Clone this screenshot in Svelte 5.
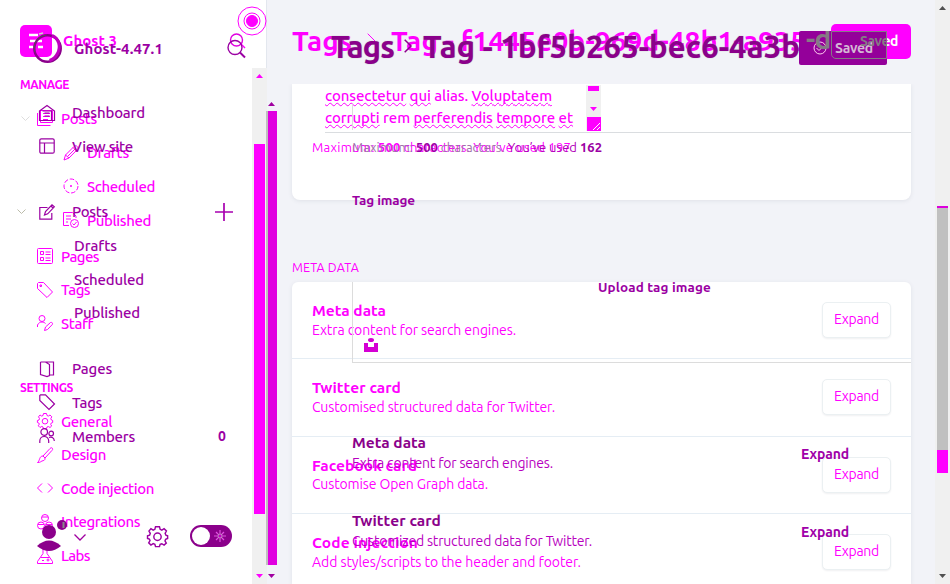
<script>
  // Stretches or tightens a label to the given width
  function fit(node, width) {
    const natural = node.getBoundingClientRect().width;
    node.style.letterSpacing = (width - natural) / node.textContent.length + 'px';
  }

  const previousNav = [
    { title: 'MANAGE', width: 49, items: [
      { label: 'Posts', width: 36, icon: 'posts', open: true },
      { label: 'Drafts', width: 42, icon: 'pencil', sub: true },
      { label: 'Scheduled', width: 68, icon: 'clock', sub: true },
      { label: 'Published', width: 64, icon: 'published', sub: true },
      { label: 'Pages', width: 38, icon: 'pages', gap: true },
      { label: 'Tags', width: 29, icon: 'tag' },
      { label: 'Staff', width: 32, icon: 'staff' }
    ] },
    { title: 'SETTINGS', width: 53, items: [
      { label: 'General', width: 51, icon: 'gear' },
      { label: 'Design', width: 45, icon: 'brush' },
      { label: 'Code injection', width: 93, icon: 'code' },
      { label: 'Integrations', width: 79, icon: 'modules' },
      { label: 'Labs', width: 29, icon: 'labs' }
    ] }
  ];

  const currentNav = [
    [
      { label: 'Dashboard', width: 73, icon: 'home' },
      { label: 'View site', width: 61, icon: 'layout' }
    ],
    [
      { label: 'Posts', width: 36, icon: 'edit', open: true, add: true },
      { label: 'Drafts', width: 43, sub: true },
      { label: 'Scheduled', width: 70, sub: true },
      { label: 'Published', width: 66, sub: true }
    ],
    [
      { label: 'Pages', width: 40, icon: 'book' },
      { label: 'Tags', width: 30, icon: 'label' },
      { label: 'Members', width: 63, icon: 'members', count: 0 }
    ]
  ];

  const sections = [
    { title: 'Meta data', tw: 74, text: 'Extra content for search engines.', dw: 204 },
    { title: 'Twitter card', tw: 89, text: 'Customised structured data for Twitter.', dw: 243 },
    { title: 'Facebook card', tw: 105, text: 'Customise Open Graph data.', dw: 176 },
    { title: 'Code injection', tw: 106, text: 'Add styles/scripts to the header and footer.', dw: 269 }
  ];

  const currentSections = [
    { title: 'Meta data', tw: 74, text: 'Extra content for search engines.', dw: 201 },
    { title: 'Twitter card', tw: 89, text: 'Customized structured data for Twitter.', dw: 240 }
  ];
</script>

{#snippet icon(name)}
  <svg class="icon" viewBox="0 0 16 16" width="16" height="16">
    {#if name === 'posts'}
      <path d="M3.5 .5h12v12h-12zM6 3.5h7M6 6.5h7M6 9.500h5M.5 3v12.500h13" />
    {:else if name === 'pencil'}
      <path d="M1 15l1.500-5L11 1.500c1-1 2.500-1 3.300 0 .9 1 .8 2.200 0 3L6 13zM2.500 10L6 13M4.500 11.500l8-8M10 2.500l3.500 3.500" />
    {:else if name === 'clock'}
      <circle cx="8" cy="8" r="7" stroke-dasharray="4.500 1.800" /><circle cx="8" cy="8" r=".6" fill="currentColor" />
    {:else if name === 'published'}
      <path d="M13 6V4L9.500.5H.5v13H6M3 4h5M3 7h5M3 10h2M9.500 11.500l1.500 1.500 2.500-3" /><circle cx="11.500" cy="11.500" r="4" />
    {:else if name === 'pages'}
      <rect x=".5" y=".5" width="15" height="15" rx="1" /><path d="M3.500 3.500h3v3h-3zM3.500 9.500h3v3h-3zM8.500 4h5M8.500 6.500h5M8.500 10h5M8.500 12.500h5" />
    {:else if name === 'tag'}
      <path d="M.5 1.500v5L10 15.500l5.500-5.500L6.500.5h-5zM3 3h1.500v1.500H3z" />
    {:else if name === 'label'}
      <path d="M.8 1.500v5L10 15.500l5.500-5.500L6.500.8h-5z" />
    {:else if name === 'staff'}
      <circle cx="5" cy="3.500" r="3" /><path d="M.5 12V10c1-2 2.500-3 4.500-3 1.500 0 2.500.5 3.500 1.500M7.500 15.500l1-3.500 5-4.500c1.500-.5 2.500.7 1.800 2L10.500 14.500z" />
    {:else if name === 'gear'}
      <path d="M6.500 .5h3l.5 2 1.300.6L13 2l1.800 1.800-1 1.800.6 1.400 1.300.5v2l-1.500.6-.5 1.300 1 1.600L13 14.500l-1.700-1-1.300.5-.5 1.700h-3L6 14l-1.300-.6L3 14.500 1.300 12.800l1-1.700L1.800 10 .4 9.500v-2L2 7l.5-1.400-1-1.800L3 2l1.700 1.100L6 2.500z" /><circle cx="8" cy="8.200" r="2.800" />
    {:else if name === 'brush'}
      <path d="M6 9l7-7.500c1-1 2.200-1 2.500 0 .4.800 0 1.500-.6 2L8 11M6 9l2 2c.3 2.500-1.500 2.500-3 3-1.500.6-1.500 1.500-4.500 1.500C3 14 2 9 6 9z" />
    {:else if name === 'code'}
      <path d="M5 3.500L.5 8 5 12.500M11 3.500L15.500 8 11 12.500" />
    {:else if name === 'modules'}
      <circle cx="8" cy="4" r="3.500" /><circle cx="4" cy="11.500" r="3.500" /><circle cx="12" cy="11.500" r="3.500" /><path d="M5 3h6M1 10.500h6M9 10.500h6" />
    {:else if name === 'labs'}
      <path d="M5 .5h6M6 .5v5L.5 13.500v2h15v-2L10 5.500v-5M3.500 9.500h9M5 12.500h2M9.500 12h3M11 10.500v3" />
    {:else if name === 'home'}
      <path d="M.5 6L8 .5 15.500 6v9.500H.5zM3.500 6h9v9.500M5.500 8h5M5.500 11h5" />
    {:else if name === 'layout'}
      <rect x=".8" y=".8" width="14.400" height="14.400" rx="1.500" /><path d="M.8 5h14.400M5.500 5v10" />
    {:else if name === 'edit'}
      <path d="M8.500 3.500H.8v11.700h12V9M5.500 11l1-3.500L13 .8l2.300 2L8.700 9.800zM12 2l2 2" />
    {:else if name === 'book'}
      <path d="M1.500 1h13v13H11M1.500 1v12.500L8 15.500 10.500 14.500V3.500L6.500 1" />
    {:else if name === 'members'}
      <circle cx="5.200" cy="4" r="3.300" /><circle cx="12.200" cy="5.500" r="2.300" /><path d="M.8 15v-2c0-3 2-4.500 4.400-4.500S9.700 10 9.700 13v2M10 9.500c3-1 5.200.2 5.300 3.500" />
    {/if}
  </svg>
{/snippet}

{#snippet down()}<svg class="caret" viewBox="0 0 9 5" width="9" height="5"><path d="M.5.5l4 4 4-4" /></svg>{/snippet}

<div class="screen">
  <div class="layer previous">
    <aside>
      <div class="brand">
        <svg width="32" height="32" viewBox="0 0 32 32"><rect width="32" height="32" rx="5" fill="#f0f" /><path d="M9 10h9M10 16h12M9 22h6M18 22h5" stroke="#fff" stroke-width="2.500" /><path d="M19 9l4-1" stroke="#d0d0d0" stroke-width="1.500" /></svg>
        <b use:fit={54}>Ghost 3</b>
      </div>
      {#each previousNav as group}
        <section>
          <h4><span use:fit={group.width}>{group.title}</span></h4>
          {#each group.items as item}
            <div class="item" class:sub={item.sub} class:gap={item.gap}>
              <i>{#if item.open}{@render down()}{/if}</i>
              {@render icon(item.icon)}
              <span use:fit={item.width}>{item.label}</span>
            </div>
          {/each}
        </section>
      {/each}
    </aside>

    <main>
      <header>
        <h1><span use:fit={60}>Tags</span><svg width="9" height="16" viewBox="0 0 9 16"><path d="M.7.7L8 8 .7 15.300" /></svg><span use:fit={415}>Tag - f1445e0b-969d-48b1-a935</span></h1>
        <div class="save"><span use:fit={37}>Sa<em>ved</em></span></div>
      </header>
      <div class="card details">
        <div class="area">
          <div class="copy">
            <p><span use:fit={227}><u>consectetur</u> <u>qui</u> alias. <u>Voluptatem</u></span></p>
            <p><span use:fit={248}><u>corrupti</u> rem <u>perferendis</u> <u>tempore</u> <u>et</u></span></p>
          </div>
          <div class="areabar"><b></b><svg width="7" height="4" viewBox="0 0 7 4"><path d="M0 0h7L3.500 4z" /></svg><svg class="grip" width="14" height="14" viewBox="0 0 14 14"><path d="M0 0h14v14H0z" /><path d="M6 13l7-7M10 13l3-3" stroke="#fff" /></svg></div>
        </div>
        <div class="limit"><span use:fit={259}>Maximum: <b>500</b> characters. You’ve used 197</span></div>
      </div>
      <h5><span use:fit={67}>META DATA</span></h5>
      <div class="card list">
        {#each sections as s}
          <div class="setting">
            <div><h3><span use:fit={s.tw}>{s.title}</span></h3><p><span use:fit={s.dw}>{s.text}</span></p></div>
            <button><span use:fit={45}>Expand</span></button>
          </div>
        {/each}
      </div>
    </main>
    <div class="pagebar">
      <svg width="7" height="4" viewBox="0 0 7 4"><path d="M0 4h7L3.500 0z" /></svg>
      <div class="thumb"></div>
      <svg width="7" height="4" viewBox="0 0 7 4"><path d="M0 0h7L3.500 4z" /></svg>
    </div>
  </div>

  <div class="navbar">
    <svg width="7" height="4" viewBox="0 0 7 4"><path d="M0 4h7L3.500 0z" /></svg>
    <div class="thumb"></div>
    <svg width="7" height="4" viewBox="0 0 7 4"><path d="M0 0h7L3.500 4z" /></svg>
  </div>
  <div class="navbar shifted">
    <svg width="7" height="4" viewBox="0 0 7 4"><path d="M0 4h7L3.500 0z" /></svg>
    <div class="thumb"></div>
    <svg width="7" height="4" viewBox="0 0 7 4"><path d="M0 0h7L3.500 4z" /></svg>
  </div>

  <div class="layer current">
    <aside>
      <div class="brand">
        <svg width="31" height="31" viewBox="0 0 31 31"><circle cx="15.500" cy="15.500" r="13.200" fill="none" stroke="#8b008b" stroke-width="2.500" /><path d="M20 2.500c7 3 9 11 5.500 18-2 4-5 6-8 7" fill="none" stroke="#c000c0" stroke-width="3" /><path d="M3 19C0 11 5 3 14 2" fill="none" stroke="#555" /></svg>
        <b use:fit={89}>Ghost-4.47.1</b>
        <svg class="search" width="20" height="28" viewBox="0 0 20 28"><circle cx="9.500" cy="8" r="6" stroke="#e000e0" /><path d="M14 12l4 4" stroke="#f0f" /><circle cx="8" cy="15.500" r="7" /><path d="M13 20.500l5 5" stroke-width="2" /></svg>
      </div>
      {#each currentNav as group}
        <section>
          {#each group as item}
            <div class="item" class:sub={item.sub}>
              <i>{#if item.open}{@render down()}{/if}</i>
              {#if item.icon}{@render icon(item.icon)}{/if}
              <span use:fit={item.width}>{item.label}</span>
              {#if item.add}<svg class="add" width="18" height="18" viewBox="0 0 18 18"><path d="M9 0v18M0 9h18" /></svg>{/if}
              {#if item.count !== undefined}<b class="count">{item.count}</b>{/if}
            </div>
          {/each}
        </section>
      {/each}
      <footer>
        <svg width="50" height="36" viewBox="0 0 50 36"><circle cx="12" cy="14" r="7" /><path d="M0 28Q12 17 24 28Q12 38 0 28z" /><circle cx="25" cy="7" r="5" /><path d="M26.500 4v6" stroke="#888" stroke-width="2" /><path d="M37.500 16.500l5.500 5.500 5.500-5.500" fill="none" stroke="#a000a0" stroke-width="1.300" /></svg>
        <span class="cog">{@render icon('gear')}</span>
        <div class="toggle"><b></b><svg width="12" height="12" viewBox="0 0 12 12"><path d="M6 0v3M6 9v3M0 6h3M9 6h3M2 2l2 2M8 8l2 2M10 2L8 4M4 8l-2 2" stroke="#e050e0" stroke-width="1.200" /><circle cx="6" cy="6" r="2.200" fill="#c000c0" stroke="#ddd" stroke-width=".7" /></svg></div>
      </footer>
    </aside>
    <main>
      <header>
        <h1><span use:fit={63}>Tags</span><svg width="8" height="14" viewBox="0 0 8 14"><path d="M.7.7L7 7 .7 13.300" /></svg><span use:fit={377}>Tag - 1bf5b265-bec6-4a3b</span></h1>
        <div class="save">
          <span class="spill">-d</span>
          <svg width="14" height="14" viewBox="0 0 14 14"><circle cx="7" cy="7" r="6" /><path d="M3.500 7l2.500 2.500L10.500 5" /></svg>
          <span use:fit={38}>Saved</span>
          <div class="edge"><span use:fit={37}>Saved</span></div>
        </div>
      </header>
      <div class="tick"></div>
      <div class="limit"><span use:fit={250}>Maximum: <b>500</b> characters. <mark>You’ve used <b>162</b></mark></span></div>
      <h4><span use:fit={63}>Tag image</span></h4>
      <div class="upload">
        <span use:fit={113}>Upload tag image</span>
        <svg width="14" height="14" viewBox="0 0 14 14"><ellipse cx="7" cy="2" rx="3" ry="2" /><path d="M0 5h4v4h6V5h4v9H0z" /></svg>
      </div>
      {#each currentSections as s}
        <div class="setting">
          <div><h3><span use:fit={s.tw}>{s.title}</span></h3><p><span use:fit={s.dw}>{s.text}</span></p></div>
          <b class="expand"><span use:fit={48}>Expand</span></b>
        </div>
      {/each}
    </main>
  </div>

  <svg class="beacon" width="30" height="30" viewBox="0 0 30 30"><circle cx="15" cy="15" r="14" fill="#fff" /><circle cx="15" cy="15" r="8" fill="none" /><circle cx="15" cy="15" r="5.500" fill="#f0f" /></svg>
</div>

<style>
  :global(body) { margin: 0; }
  .screen { position: relative; width: 950px; height: 584px; overflow: hidden; background: #f2f3f8; font-family: Ubuntu, "Noto Sans", "Open Sans", sans-serif; font-size: 15px; color: #f0f; }
  .screen * { box-sizing: border-box; }
  span, b { white-space: nowrap; }
  span { display: inline-block; flex: none; }
  h1, h3, h4, h5, p { margin: 0; }
  svg { display: block; flex: none; overflow: visible; }
  .layer { position: absolute; inset: 0; display: flex; }
  aside { flex: none; width: 267px; height: 584px; display: flex; flex-direction: column; }
  .icon { fill: none; stroke: currentColor; stroke-width: 1; }
  .item { display: flex; align-items: center; height: 33.600px; flex: none; }
  .item i { width: 37px; padding-left: 21px; flex: none; }
  .item .icon { margin-right: 8px; }
  .caret { fill: none; stroke: #ddd; }
  main { flex: none; display: flex; flex-direction: column; }
  header { display: flex; align-items: center; position: relative; }
  h1 { display: flex; align-items: center; font-weight: 700; line-height: 1; }
  h1 svg { fill: none; stroke: currentColor; stroke-width: 1.500; }
  .setting { display: flex; justify-content: space-between; height: 77.400px; }
  .setting p { font-size: 14px; line-height: 18px; }
  h3 { font-size: 15.500px; line-height: 20px; font-weight: 700; }
  .limit { font-size: 13px; line-height: 18px; }

  .previous { font-weight: 500; }
  .previous aside { background: #fff; border-right: 1px solid #e3e7ee; }
  .previous .brand { display: flex; padding: 25px 0 0 20px; height: 76px; gap: 11px; flex: none; }
  .previous .brand b { line-height: 32px; font-size: 15px; height: 32px; }
  .previous h4 { padding-left: 20px; font-size: 12px; font-weight: 700; line-height: 18px; height: 25.500px; }
  .previous section + section { margin-top: 38.700px; }
  .previous .sub i { width: 63px; }
  .previous .sub { position: relative; top: 1px; }
  .previous .gap { margin-top: 3.500px; }
  .previous main { width: 668px; padding: 0 24px 0 25px; }
  .previous header { height: 84px; padding-bottom: 3px; }
  .previous h1 { font-size: 28px; }
  .previous h1 svg { margin: 0 15px; stroke-width: 1; }
  .previous .save { position: absolute; right: 0; top: 24px; width: 80px; height: 35px; border-radius: 5px; background: #f0f; color: #857a85; font-size: 14px; font-weight: 600; line-height: 35px; padding-left: 30px; }
  em { font-style: normal; color: #fff; }
  .card { background: #fff; box-shadow: 0 1px 4px #dfe1e8; }
  .details { height: 116px; border-radius: 0 0 8px 8px; padding: 0 20px; clip-path: inset(0 -6px -6px -6px); }
  .area { display: flex; margin: 0 -20px 0 13px; height: 49px; border-bottom: 1px solid #dadde0; }
  .copy { width: 261px; padding-top: 1px; }
  .copy p { line-height: 22px; font-size: 15px; }
  u { text-decoration: underline wavy 1px; text-underline-offset: 1px; text-decoration-skip-ink: none; }
  .areabar { width: 15px; background: #f0f0f0; fill: #f0f; display: flex; flex-direction: column; align-items: center; margin-top: 1px; height: 46px; }
  .areabar b { width: 11px; height: 5px; margin: 1px 0 16px; background: #f0f; }
  .grip { margin-top: 6px; }
  .previous .limit { padding-top: 5px; font-weight: 400; }
  .previous .limit b { font-weight: 700; }
  h5 { font-size: 12.500px; font-weight: 400; line-height: 18px; padding-top: 58px; height: 82px; }
  .list { height: 302px; border-radius: 6px 6px 0 0; }
  .list .setting { padding: 19px 20px 0; border-bottom: 1px solid #e5edf4; font-weight: 400; }
  .list p { margin-top: -.500px; }
  button { width: 69px; height: 36px; margin-top: 1px; border: 1px solid #ebf0f2; border-radius: 5px; background: #fff; color: #f0f; padding: 0 0 2px; font: 14px Ubuntu, "Noto Sans", "Open Sans", sans-serif; box-shadow: 0 1px 2px #f0f0f2; }
  .pagebar { width: 15px; background: #f0f0f0; display: flex; flex-direction: column; align-items: center; justify-content: space-between; fill: #505050; padding: 6px 0 6px; }
  .pagebar .thumb { width: 11px; height: 267px; margin-top: 103px; border-top: 2px solid #d0d; border-bottom: 23px solid #f0f; background: #c0c0c0; margin-bottom: 8px; }

  .navbar { position: absolute; left: 252px; top: 68px; width: 15px; height: 516px; display: flex; flex-direction: column; align-items: center; background: #f0f0f0; padding-top: 6px; fill: #f0f; }
  .navbar .thumb { width: 11px; height: 370px; background: #f0f; margin: 66px 0 60px; }
  .navbar.shifted { left: 266px; top: 101px; width: 11px; height: 483px; background: none; padding-top: 1px; fill: #a000a0; }
  .shifted .thumb { height: 454px; margin: 5px 0 9px; background: #e000e0; border-left: 2px solid #c0c0c0; }

  .current { color: #9b00a3; font-weight: 500; }
  .current .brand { display: flex; align-items: center; height: 96px; padding-left: 32px; gap: 11px; flex: none; }
  .current .brand b { font-size: 15px; }
  .search { margin-left: 53px; margin-top: -5px; fill: none; stroke: #9b00a3; stroke-width: 1.400; }
  .current section { margin-bottom: 32px; }
  .current section + section + section { margin-top: -9.500px; margin-bottom: 0; }
  .current .item i { width: 39px; padding-left: 17px; }
  .current .item .icon { margin-right: 17px; stroke-width: 1.200; }
  .current .sub i { width: 74px; }
  .current .caret { stroke: #bba; }
  .add { margin-left: 107px; fill: none; stroke: #a800b0; stroke-width: 1.700; }
  .count { margin-left: 83px; font-size: 14px; }
  footer { display: flex; align-items: center; height: 36px; margin-top: auto; margin-bottom: 30px; padding-left: 37px; fill: #8b008b; }
  .cog { margin-left: 60px; width: 22px; }
  .cog :global(svg) { width: 21px; height: 21px; stroke-width: 1.100; }
  .toggle { width: 42px; height: 22px; border-radius: 11px; background: #8b008b; margin-left: 21px; padding: 2px 6px 2px 2px; display: flex; align-items: center; justify-content: space-between; }
  .toggle b { width: 18px; height: 18px; border-radius: 50%; background: #fff; }
  .current main { width: 645px; padding-left: 86px; margin-left: -1px; }
  .current header { height: 104px; padding-bottom: 12px; margin-left: -21px; flex: none; }
  .current h1 { font-size: 31px; color: #8b008b; text-shadow: 0 0 1px #999; }
  .current h1 svg { margin: 0 11px 0 10px; }
  .current .save { position: absolute; left: 468px; top: 31px; width: 88px; height: 34px; border-radius: 2px; background: #94009a; display: flex; align-items: center; padding-left: 14px; gap: 8px; fill: none; stroke: #fce; color: #d5b8d5; font-size: 14px; font-weight: 600; }
  .spill { position: absolute; left: 7px; top: -10px; font-size: 28px; line-height: 36px; font-weight: 700; color: #857a85; letter-spacing: -1px; clip-path: inset(10px 0 0 0); }
  .edge { position: absolute; left: 32px; top: 0; width: 56px; height: 28px; border: 1px solid #857a85; border-bottom-left-radius: 5px; overflow: hidden; }
  .edge span { position: relative; left: 28px; top: 1px; color: #857a85; }
  .tick { width: 1px; height: 26px; background: #dcdcdc; flex: none; }
  .current .limit { padding-top: 8px; height: 61px; color: #a070a8; font-weight: 400; }
  .limit mark { background: none; color: #b000b8; }
  .current .limit b { color: #9b00a3; }
  .current h4 { font-size: 13.500px; font-weight: 700; line-height: 19px; height: 91px; }
  .upload { height: 81px; border-left: 1px solid #dcdcdc; border-bottom: 1px solid #dcdcdc; width: 559px; font-size: 13.500px; font-weight: 700; display: flex; flex-direction: column; fill: #d400d4; line-height: 11px; flex: none; }
  .upload span { margin-left: 245px; align-self: flex-start; }
  .upload svg { margin: 45px 0 0 11px; }
  .current .setting { padding-top: 70px; height: 147.600px; padding-right: 62px; flex: none; }
  .current .setting + .setting { padding-top: 0; height: 60px; }
  .current .setting p { line-height: 20px; font-weight: 400; color: #b800c0; }
  .current h3 { color: #8b008b; }
  .expand { font-size: 14px; line-height: 20px; margin-top: 11px; color: #a000a8; }
  .beacon { position: absolute; left: 237px; top: 6px; stroke: #f0f; }
</style>
